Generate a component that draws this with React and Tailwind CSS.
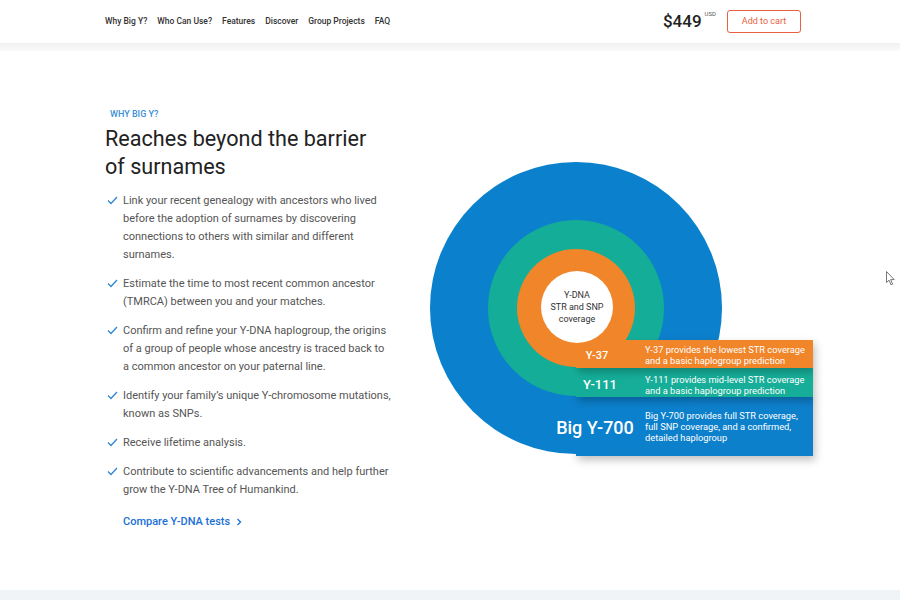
import React from 'react';

const navItems = ['Why Big Y?', 'Who Can Use?', 'Features', 'Discover', 'Group Projects', 'FAQ'];

const points = [
  'Link your recent genealogy with ancestors who lived before the adoption of surnames by discovering connections to others with similar and different surnames.',
  'Estimate the time to most recent common ancestor (TMRCA) between you and your matches.',
  'Confirm and refine your Y-DNA haplogroup, the origins of a group of people whose ancestry is traced back to a common ancestor on your paternal line.',
  'Identify your family’s unique Y-chromosome mutations, known as SNPs.',
  'Receive lifetime analysis.',
  'Contribute to scientific advancements and help further grow the Y-DNA Tree of Humankind.',
];

function Check() {
  return (
    <svg width="11" height="9" viewBox="0 0 11 9" className="mt-[4px] shrink-0">
      <path d="M1 4.5 L4 7.5 L10 1" fill="none" stroke="#2f86d4" strokeWidth="1.3" />
    </svg>
  );
}

function Chart() {
  const font = { fontFamily: 'Roboto, sans-serif' };
  return (
    <svg width="410" height="320" viewBox="0 0 410 320" style={font}>
      <defs>
        <filter id="sh" x="-10%" y="-20%" width="120%" height="160%">
          <feDropShadow dx="2" dy="4" stdDeviation="4" floodColor="#000" floodOpacity="0.25" />
        </filter>
      </defs>
      <rect x="156" y="246" width="237" height="60" fill="#0b80cc" filter="url(#sh)" />
      <circle cx="156" cy="158" r="146" fill="#0b80cc" />
      <rect x="156" y="217" width="237" height="30" fill="#14ae98" filter="url(#sh)" />
      <circle cx="156" cy="158" r="88" fill="#14ae98" />
      <rect x="156" y="190" width="237" height="28" fill="#f0852a" filter="url(#sh)" />
      <circle cx="156" cy="158" r="59" fill="#f0852a" />
      <circle cx="157" cy="157" r="36" fill="#fff" />
      <g fill="#333" fontSize="9" textAnchor="middle">
        <text x="157" y="148">Y-DNA</text>
        <text x="157" y="160">STR and SNP</text>
        <text x="157" y="172">coverage</text>
      </g>
      <g fill="#fff" fontWeight="500" textAnchor="middle">
        <text x="177" y="209" fontSize="11">Y-37</text>
        <text x="180" y="239" fontSize="13">Y-111</text>
        <text x="175" y="284" fontSize="18">Big Y-700</text>
      </g>
      <g fill="#fff" fontSize="9.3">
        <text x="225" y="203">Y-37 provides the lowest STR coverage</text>
        <text x="225" y="214">and a basic haplogroup prediction</text>
        <text x="225" y="233">Y-111 provides mid-level STR coverage</text>
        <text x="225" y="244">and a basic haplogroup prediction</text>
        <text x="225" y="269">Big Y-700 provides full STR coverage,</text>
        <text x="225" y="280">full SNP coverage, and a confirmed,</text>
        <text x="225" y="291">detailed haplogroup</text>
      </g>
    </svg>
  );
}

export default function App() {
  return (
    <div className="relative w-[900px] h-[600px] overflow-hidden bg-white font-['Roboto',sans-serif]">
      <header className="h-[43px] flex items-center pl-[105px] pr-[99px]">
        <nav className="flex gap-[10px] text-[8.5px] font-medium text-[#333]">
          {navItems.map((n) => (
            <span key={n}>{n}</span>
          ))}
        </nav>
        <div className="ml-auto flex items-center">
          <span className="text-[17px] font-medium text-[#222] leading-none">$449</span>
          <span className="text-[6px] text-[#555] self-start mt-[-1px] ml-[3px]">USD</span>
          <button className="ml-[11px] w-[74px] h-[23px] border border-[#e8623f] rounded-[3px] text-[#e8623f] text-[9px] bg-white">
            Add to cart
          </button>
        </div>
      </header>
      <div className="h-[8px] bg-gradient-to-b from-[#f1f1f1] to-[#fafafa]" />
      <main className="flex h-[539px]">
        <section className="pl-[105px] pt-[57px] w-[400px]">
          <div className="pl-[5px] text-[9px] font-medium text-[#3a8fd6] uppercase">Why Big Y?</div>
          <h1 className="mt-[3px] text-[21.6px] font-normal leading-[28px] text-[#222] w-[272px]">
            Reaches beyond the barrier of surnames
          </h1>
          <ul className="mt-[11px] flex flex-col gap-[11px]">
            {points.map((p) => (
              <li key={p} className="flex gap-[5px] pl-[2px]">
                <Check />
                <span className="text-[11px] leading-[18px] text-[#555] w-[268px]">{p}</span>
              </li>
            ))}
          </ul>
          <a className="mt-[15px] ml-[18px] flex items-center gap-[6px] text-[11px] font-medium text-[#1a6fd8]">
            Compare Y-DNA tests
            <svg width="6" height="8" viewBox="0 0 6 8">
              <path d="M1.5 1 L4.5 4 L1.5 7" fill="none" stroke="#1a6fd8" strokeWidth="1.3" />
            </svg>
          </a>
        </section>
        <div className="pt-[99px] pl-[20px]">
          <Chart />
        </div>
      </main>
      <div className="h-[10px] bg-[#f0f4f7]" />
      <svg className="absolute left-[886px] top-[271px]" width="10" height="15" viewBox="0 0 10 15">
        <path d="M0.5 0.5 L0.5 11.5 L3 9.2 L5 13.8 L6.6 13.1 L4.7 8.6 L8.2 8.6 Z" fill="#fff" stroke="#555" strokeWidth="0.8" />
      </svg>
    </div>
  );
}
